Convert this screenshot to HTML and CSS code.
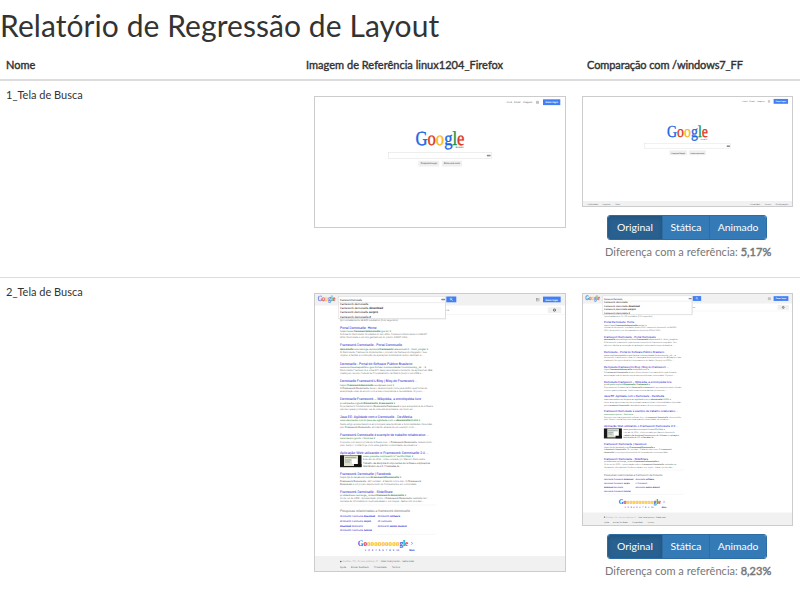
FILE: index.html
```html
<!DOCTYPE html>
<html lang="pt-BR">
<head>
<meta charset="utf-8">
<title>Relatório de Regressão de Layout</title>
<link rel="stylesheet" href="styles.css">
</head>
<body>
<svg class="defs" width="0" height="0" aria-hidden="true">
  <symbol id="kbd" viewBox="0 0 4 2"><rect width="4" height="2" fill="#777"/><path d="M.5 .7h3M.8 1.4h2.4" stroke="#ccc" stroke-width=".25"/></symbol>
  <symbol id="apps" viewBox="0 0 3 3"><path d="M0 .4h3M0 1.5h3M0 2.6h3" stroke="#888" stroke-width=".75" stroke-dasharray=".8 .3"/></symbol>
</svg>

<h1>Relatório de Regressão de Layout</h1>
<table class="report">
  <colgroup><col class="col-name"><col class="col-ref"><col class="col-cmp"></colgroup>
  <thead>
    <tr><th>Nome</th><th>Imagem de Referência linux1204_Firefox</th><th class="cmp-head">Comparação com /windows7_FF</th></tr>
  </thead>
  <tbody>
    <tr class="first">
      <td class="name">1_Tela de Busca</td>
      <td class="ref"><svg class="thumb home" viewBox="1 1 250 130" preserveAspectRatio="none">
  <g id="home">
    <rect width="252" height="132" fill="#fff"/>
    <g class="tiny">
      <text x="191.3" y="7.2" textLength="6.7" lengthAdjust="spacingAndGlyphs">+Você</text><text x="200" y="7.2" textLength="6.3" lengthAdjust="spacingAndGlyphs">Gmail</text><text x="209" y="7.2" textLength="9.3" lengthAdjust="spacingAndGlyphs">Imagens</text>
    </g>
    <use href="#apps" x="222" y="4.8" width="3" height="3"/>
    <rect x="229" y="3.3" width="17.3" height="5.8" fill="#4080f4"/>
    <text class="login" x="231.5" y="7.2" textLength="12.4" lengthAdjust="spacingAndGlyphs">Fazer login</text>
    <text class="logo" x="101.5" y="49.2" textLength="49" lengthAdjust="spacingAndGlyphs"><tspan class="b">G</tspan><tspan class="r">o</tspan><tspan class="y">o</tspan><tspan class="b">g</tspan><tspan class="g">l</tspan><tspan class="r">e</tspan></text>
    <text class="tiny" x="141.5" y="51.8" textLength="8" lengthAdjust="spacingAndGlyphs">Brasil</text>
    <rect x="74.5" y="56.5" width="103" height="6.2" fill="#fff" stroke="#ddd" stroke-width=".5"/>
    <use href="#kbd" x="172.7" y="58.6" width="4" height="2"/>
    <rect x="104.3" y="64.7" width="21" height="5.8" fill="#f0f0f0"/><rect x="127.8" y="64.7" width="20.2" height="5.8" fill="#f0f0f0"/>
    <g class="tiny bold"><text x="106.7" y="68.4" textLength="16.4" lengthAdjust="spacingAndGlyphs">Pesquisa Google</text><text x="130" y="68.4" textLength="16" lengthAdjust="spacingAndGlyphs">Estou com sorte</text></g>
  </g></svg></td>
      <td class="cmp">
        <svg class="thumb home" viewBox="1 1 250 130" preserveAspectRatio="none"><use href="#home"/>
          <rect y="125" width="252" height="7" fill="#f1f1f1"/>
          <g class="tiny"><text x="6.4" y="129.4" textLength="12.8" lengthAdjust="spacingAndGlyphs">Publicidade</text><text x="24.4" y="129.4" textLength="9.6" lengthAdjust="spacingAndGlyphs">Negócios</text><text x="39.6" y="129.4" textLength="6" lengthAdjust="spacingAndGlyphs">Sobre</text><text x="201" y="129.4" textLength="12" lengthAdjust="spacingAndGlyphs">Privacidade</text><text x="218" y="129.4" textLength="8" lengthAdjust="spacingAndGlyphs">Termos</text><text x="231.6" y="129.4" textLength="15" lengthAdjust="spacingAndGlyphs">Configurações</text></g>
        </svg>
        <div class="modes"><button class="active">Original</button><button>Stática</button><button>Animado</button></div>
        <p class="diff">Diferença com a referência: <b>5,17%</b></p>
      </td>
    </tr>
    <tr>
      <td class="name">2_Tela de Busca</td>
      <td class="ref"><svg class="thumb results" viewBox="1 1 250 277" preserveAspectRatio="none">
  <g id="results">
    <rect width="252" height="279" fill="#fff"/>
    <rect width="252" height="12.5" fill="#f1f1f1"/>
    <text class="logo small" x="3.8" y="8.2" textLength="17.5" lengthAdjust="spacingAndGlyphs"><tspan class="b">G</tspan><tspan class="r">o</tspan><tspan class="y">o</tspan><tspan class="b">g</tspan><tspan class="g">l</tspan><tspan class="r">e</tspan></text>
    <path d="M24.5 21.5H252" stroke="#eee" stroke-width=".5"/>
    <rect x="25" y="9.5" width="107" height="16.8" fill="#ddd"/>
    <rect x="24.3" y="3.3" width="107" height="22.4" fill="#fff" stroke="#d4d4d4" stroke-width=".5"/>
    <path d="M24.3 9.6h107" stroke="#ddd" stroke-width=".5"/>
    <text class="desc" x="26" y="28.4" textLength="58" lengthAdjust="spacingAndGlyphs">Aproximadamente 35.500 resultados (0,31 segundos)</text>
    <g class="query">
      <text x="26" y="7.8" textLength="22" lengthAdjust="spacingAndGlyphs">Framework Demoiselle</text>
      <text x="26" y="12.2" textLength="28.5" lengthAdjust="spacingAndGlyphs">framework demoiselle</text>
      <text x="26" y="16.3" textLength="43" lengthAdjust="spacingAndGlyphs">framework demoiselle <tspan class="bold">download</tspan></text>
      <text x="26" y="20.4" textLength="38" lengthAdjust="spacingAndGlyphs">framework demoiselle <tspan class="bold">serpro</tspan></text>
      <text x="26" y="24.6" textLength="31" lengthAdjust="spacingAndGlyphs">framework demoiselle <tspan class="bold">2</tspan></text>
    </g>
    <use href="#kbd" x="127.2" y="5.6" width="3.8" height="1.9"/>
    <rect x="132.3" y="3.5" width="10" height="5.8" fill="#4080f4"/>
    <circle cx="137" cy="6" r=".9" fill="none" stroke="#fff" stroke-width=".5"/><path d="M137.6 6.6l1.2 1.2" stroke="#fff" stroke-width=".5"/>
    <text class="tiny" x="132.2" y="18" textLength="3" lengthAdjust="spacingAndGlyphs">ros</text>
    <use href="#apps" x="222" y="4.9" width="3.6" height="3.6"/>
    <rect x="229" y="3.6" width="17.7" height="5.7" fill="#4080f4"/>
    <text class="login" x="231.5" y="7.5" textLength="12.5" lengthAdjust="spacingAndGlyphs">Fazer login</text>
    <rect x="233.8" y="14.2" width="13.4" height="5.8" fill="#f0f0f0"/><circle cx="240.5" cy="17.1" r="1.1" fill="none" stroke="#555" stroke-width=".9"/>
    <g class="title">
      <text x="26" y="35.7" textLength="36.5" lengthAdjust="spacingAndGlyphs">Portal Demoiselle: Home</text>
      <text x="26" y="53.4" textLength="62" lengthAdjust="spacingAndGlyphs">Framework Demoiselle - Portal Demoiselle</text>
      <text x="26" y="71.6" textLength="72.3" lengthAdjust="spacingAndGlyphs">Demoiselle - Portal do Software Público Brasileiro</text>
      <text x="26" y="89.4" textLength="77.7" lengthAdjust="spacingAndGlyphs">Demoiselle Framework's Blog | Blog do Framework ...</text>
      <text x="26" y="107.2" textLength="81" lengthAdjust="spacingAndGlyphs">Demoiselle Framework – Wikipédia, a enciclopédia livre</text>
      <text x="26" y="125.1" textLength="72" lengthAdjust="spacingAndGlyphs">Java EE: Agilidade com o Demoiselle - DevMedia</text>
      <text x="26" y="143" textLength="89" lengthAdjust="spacingAndGlyphs">Framework Demoiselle é exemplo de trabalho colaborativo ...</text>
      <text x="26" y="160.8" textLength="89" lengthAdjust="spacingAndGlyphs">Aplicação Web utilizando o Framework Demoiselle 2.0 ...</text>
      <text x="26" y="182" textLength="51" lengthAdjust="spacingAndGlyphs">Framework Demoiselle | Facebook</text>
      <text x="26" y="199.7" textLength="52.7" lengthAdjust="spacingAndGlyphs">Framework Demoiselle - SlideShare</text>
    </g>
    <g class="url">
      <text x="26" y="39" textLength="51" lengthAdjust="spacingAndGlyphs">https://www.<tspan class="bold">frameworkdemoiselle</tspan>.gov.br/ ▾</text>
      <text x="26" y="56.7" textLength="88" lengthAdjust="spacingAndGlyphs"><tspan class="bold">demoiselle</tspan>.sourceforge.net/docs/<tspan class="bold">framework</tspan>/reference/2.0.../html_single/ ▾</text>
      <text x="26" y="74.9" textLength="86" lengthAdjust="spacingAndGlyphs">www.softwarepublico.gov.br/ver-comunidade?community_id... ▾</text>
      <text x="26" y="92.7" textLength="54" lengthAdjust="spacingAndGlyphs">https://<tspan class="bold">frameworkdemoiselle</tspan>.wordpress.com/ ▾</text>
      <text x="26" y="110.5" textLength="55" lengthAdjust="spacingAndGlyphs">pt.wikipedia.org/wiki/<tspan class="bold">Demoiselle_Framework</tspan> ▾</text>
      <text x="26" y="128.4" textLength="80" lengthAdjust="spacingAndGlyphs">www.devmedia.com.br/java-ee-agilidade-com-o-<tspan class="bold">demoiselle</tspan>/31256 ▾</text>
      <text x="26" y="146.3" textLength="35" lengthAdjust="spacingAndGlyphs">www.serpro.gov.br › Notícias ▾</text>
      <text x="49" y="164.2" textLength="50" lengthAdjust="spacingAndGlyphs">www.youtube.com/watch?v=sw1FzhNqk ▾</text>
      <text x="26" y="185.3" textLength="61" lengthAdjust="spacingAndGlyphs">https://pt-br.facebook.com/<tspan class="bold">FrameworkDemoiselle</tspan> ▾</text>
      <text x="26" y="203" textLength="66" lengthAdjust="spacingAndGlyphs">pt.slideshare.net/range_rs/semi<tspan class="bold">framework-demoiselle</tspan> ▾</text>
    </g>
    <g class="desc">
      <text x="26" y="42.2" textLength="87" lengthAdjust="spacingAndGlyphs">Notícias do Demoiselle. Novidades do ano 2013. Framework Demoiselle no GECOP</text><text x="26" y="45.4" textLength="70" lengthAdjust="spacingAndGlyphs">2013. Demoiselle é um dos ganhadores do prêmio CONIP 2013 ...</text>
      <text x="26" y="59.9" textLength="87" lengthAdjust="spacingAndGlyphs">O Demoiselle Framework implementa o conceito de framework integrador. Seu</text><text x="26" y="63.1" textLength="84" lengthAdjust="spacingAndGlyphs">objetivo é facilitar a construção de aplicações minimizando tempo dedicado à ...</text>
      <text x="26" y="78.1" textLength="93" lengthAdjust="spacingAndGlyphs">Demoiselle Framework é uma API Java para desenvolvimento de aplicações JEE,</text><text x="26" y="81.3" textLength="84" lengthAdjust="spacingAndGlyphs">criada pelo Serviço Federal de Processamento de Dados (Serpro) em 2008 e ...</text>
      <text x="26" y="95.9" textLength="87" lengthAdjust="spacingAndGlyphs">O <tspan class="bold">Framework Demoiselle</tspan> deixa o desenvolvedor livre para definir qual forma de</text><text x="26" y="99.1" textLength="85" lengthAdjust="spacingAndGlyphs">autenticação usar de acordo com a sua conveniência e necessidade. O pouco ...</text>
      <text x="26" y="113.7" textLength="93" lengthAdjust="spacingAndGlyphs">O pensamento fundamental do <tspan class="bold">Demoiselle Framework</tspan> é que a arquitetura de software</text><text x="26" y="116.9" textLength="75" lengthAdjust="spacingAndGlyphs">resolver quase problemas, via de uma estrutura básica, ele muito as ...</text>
      <text x="26" y="131.6" textLength="92" lengthAdjust="spacingAndGlyphs">Neste artigo apresentaremos as principais características e funcionalidades oferecidas</text><text x="26" y="134.8" textLength="77" lengthAdjust="spacingAndGlyphs">pelo <tspan class="bold">Framework Demoiselle</tspan>, abordando através de um exemplo como ...</text>
      <text x="26" y="149.5" textLength="92" lengthAdjust="spacingAndGlyphs">Coerente com sua proposta de software livre, o <tspan class="bold">Framework Demoiselle</tspan>, desenvolvido</text><text x="26" y="152.7" textLength="80" lengthAdjust="spacingAndGlyphs">pelo Serpro, conta hoje com uma grande comunidade de usuários ...</text>
      <text x="49" y="167.3" textLength="62" lengthAdjust="spacingAndGlyphs">5 de abr de 2011 - Vídeo enviado por Marcelo Demoiselle</text><text x="49" y="170.8" textLength="67" lengthAdjust="spacingAndGlyphs" class="dark">Trabalho da disciplina Componentes de Software e Aplicações</text><text x="49" y="174" textLength="39" lengthAdjust="spacingAndGlyphs" class="dark">Web Módulo de 2.0. # Camadas de ...</text>
      <text x="26" y="188.5" textLength="81" lengthAdjust="spacingAndGlyphs"><tspan class="bold">Framework Demoiselle</tspan>. 387 curtidas · 8 falando sobre isso. O <tspan class="bold">Framework</tspan></text><text x="26" y="191.7" textLength="77" lengthAdjust="spacingAndGlyphs"><tspan class="bold">Demoiselle</tspan> é um projeto desenvolvido de forma aberta e em comunidade.</text>
      <text x="26" y="206.2" textLength="87" lengthAdjust="spacingAndGlyphs">21 de out de 2009 - Apresentação sobre o <tspan class="bold">Framework Demoiselle</tspan> realizada na I</text><text x="26" y="209.4" textLength="84" lengthAdjust="spacingAndGlyphs">Semana de Informática do Sudoeste Baiano, em Jequié - Bahia. Um dos das ...</text>
    </g>
    <rect x="26" y="162.2" width="21.5" height="12" fill="#181818"/><rect x="30" y="162.5" width="14" height="10.5" fill="#dcdfca"/><path d="M31 164.5h11M31 167h6M31 169h5" stroke="#8897a5" stroke-width=".7"/><rect x="38" y="166" width="5" height="5" fill="#fff"/><rect x="40" y="171" width="7.5" height="3" fill="#111"/>
    <path d="M26 212H122M26 241.3H122" stroke="#eee" stroke-width=".5"/>
    <text class="related" x="26" y="219.2" textLength="70" lengthAdjust="spacingAndGlyphs">Pesquisas relacionadas a framework demoiselle</text>
    <g class="link">
      <text x="26" y="224.3" textLength="35" lengthAdjust="spacingAndGlyphs">demoiselle framework <tspan class="bold">download</tspan></text><text x="63.7" y="224.3" textLength="22.3" lengthAdjust="spacingAndGlyphs">demoiselle <tspan class="bold">software</tspan></text>
      <text x="26" y="228.9" textLength="31" lengthAdjust="spacingAndGlyphs">demoiselle framework <tspan class="bold">serpro</tspan></text><text x="63.7" y="228.9" textLength="14" lengthAdjust="spacingAndGlyphs">c# framework</text>
      <text x="26" y="233.5" textLength="23" lengthAdjust="spacingAndGlyphs"><tspan class="bold">download</tspan> demoiselle</text><text x="63.7" y="233.5" textLength="29" lengthAdjust="spacingAndGlyphs">demoiselle <tspan class="bold">santos dumont</tspan></text>
      <text x="26" y="238.1" textLength="32" lengthAdjust="spacingAndGlyphs">demoiselle framework <tspan class="bold">tutorial</tspan></text>
      <text x="50.7" y="257.5" textLength="34.5">1 &#160; 2 &#160; 3 &#160; 4 &#160; 5 &#160; 6 &#160; 7 &#160; 8 &#160; 9 &#160; 10</text><text class="bold" x="95.3" y="257.5" textLength="5.4" lengthAdjust="spacingAndGlyphs">Mais</text>
    </g>
    <text class="logo pages" x="43.8" y="252.8" textLength="50.4" lengthAdjust="spacingAndGlyphs"><tspan class="b">G</tspan><tspan class="r">o</tspan><tspan class="y">ooooooooo</tspan><tspan class="b">g</tspan><tspan class="g">l</tspan><tspan class="r">e</tspan></text>
    <path d="M97.3 249l1.2 1.3-1.2 1.3" stroke="#4080f4" stroke-width=".7" fill="none"/>
    <rect y="263" width="252" height="16" fill="#f1f1f1"/>
    <circle cx="26.8" cy="268.5" r=".8" fill="#555"/>
    <g class="tiny"><text x="28.5" y="269.4" textLength="37" lengthAdjust="spacingAndGlyphs" class="pale">Curitiba - PR - Do seu endereço IP -</text><text x="67" y="269.4" textLength="33" lengthAdjust="spacingAndGlyphs">Usar local preciso - Saiba mais</text>
      <text x="26" y="275.3" textLength="6" lengthAdjust="spacingAndGlyphs">Ajuda</text><text x="37" y="275.3" textLength="17.7" lengthAdjust="spacingAndGlyphs">Enviar feedback</text><text x="60" y="275.3" textLength="12.7" lengthAdjust="spacingAndGlyphs">Privacidade</text><text x="78" y="275.3" textLength="8" lengthAdjust="spacingAndGlyphs">Termos</text></g>
  </g></svg></td>
      <td class="cmp">
        <svg class="thumb results" viewBox="1 1 250 277" preserveAspectRatio="none"><use href="#results"/></svg>
        <div class="modes"><button class="active">Original</button><button>Stática</button><button>Animado</button></div>
        <p class="diff">Diferença com a referência: <b>8,23%</b></p>
      </td>
    </tr>
  </tbody>
</table>
</body>
</html>
```

FILE: styles.css
```css
* { box-sizing: border-box; }
body { margin: 0; background: #fff; color: #333; font: 11px/16px Lato, sans-serif; overflow: hidden; }
.defs { position: absolute; }
h1 { margin: 0; padding-top: 7px; height: 50px; font-size: 30px; line-height: 36px; font-weight: 400; letter-spacing: .07px; white-space: nowrap; }

.report { width: 800px; table-layout: fixed; border-collapse: separate; border-spacing: 0; }
.col-name { width: 300px; }
.col-ref { width: 275px; }
th { height: 31px; padding: 1px 6px 0; border-bottom: 2px solid #ddd; text-align: left; font-weight: 400; letter-spacing: .02px; -webkit-text-stroke: .4px #333; white-space: nowrap; vertical-align: middle; }
.cmp-head { padding-left: 12px; letter-spacing: -.1px; }
td { padding: 0; vertical-align: top; }
.first { height: 197px; }
.first td { border-bottom: 1px solid #ddd; }
.name { padding: 6px 6px; }
.ref { padding: 15px 0 0 14px; }
.cmp { padding: 15px 0 0 7px; }

.thumb { display: block; border: 1px solid #ccc; font-family: "Liberation Sans", sans-serif; text-rendering: geometricPrecision; }
.ref .thumb { width: 252px; }
.cmp .thumb { width: 211px; }
.ref .home { height: 132px; }
.cmp .home { height: 111px; }
.ref .results { height: 279px; }
.cmp .results { height: 233px; }

.modes { display: flex; width: 160px; height: 25px; margin: 8px 0 0 25px; border: 1px solid #2e6da4; border-radius: 3px; overflow: hidden; }
.modes button { padding: 0; border: 0; border-left: 1px solid #2e6da4; background: #337ab7; color: #fff; font: 10.4px/23px Lato, sans-serif; flex: 0 0 47px; }
.modes button:last-child { flex: 1; }
.modes .active { flex: 0 0 54px; background: #286090; border-left: 0; box-shadow: inset 0 2px 4px rgba(0, 0, 0, .15); }
.diff { margin: 4px 0 0 23px; color: #777; letter-spacing: .03px; white-space: nowrap; }
.diff b { font-weight: 400; -webkit-text-stroke: .45px #777; }

.tiny { font-size: 2.4px; fill: #666; }
.bold { font-weight: 700; }
.pale { fill: #aaa; }
.login { font-size: 2.5px; font-weight: 700; fill: #fff; }
.logo { font: 20px "Liberation Serif", serif; stroke-width: .4px; }
.small { font-size: 8px; stroke-width: .15px; }
.pages { font-size: 8.5px; font-weight: 700; stroke-width: 0; }
.b { fill: #1a65e0; stroke: #1a65e0; }
.r { fill: #dc3524; stroke: #dc3524; }
.y { fill: #fbb914; stroke: #fbb914; }
.g { fill: #14924b; stroke: #14924b; }
.query { font-size: 3px; fill: #222; }
.title { font-size: 3.5px; fill: #2518cc; }
.url { font-size: 2.5px; fill: #168038; }
.desc { font-size: 2.4px; fill: #777; }
.dark { fill: #444; }
.related { font-size: 3.5px; fill: #777; }
.link { font-size: 2.6px; fill: #2518cc; }
```
